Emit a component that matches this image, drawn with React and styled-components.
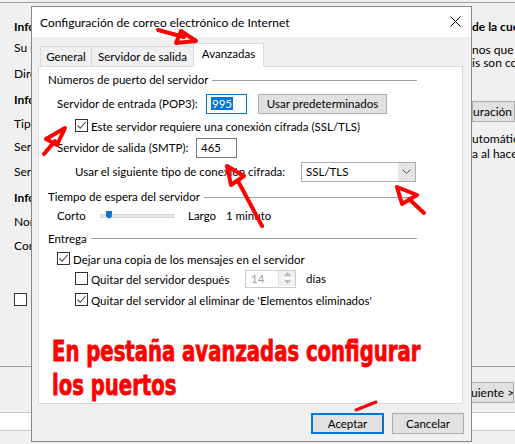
import React from "react";
import styled, { createGlobalStyle } from "styled-components";

const GlobalStyle = createGlobalStyle`
  html, body { margin: 0; padding: 0; }
  body {
    width: 515px;
    height: 444px;
    overflow: hidden;
    background: #f0f0f0;
    font-family: Lato, "Noto Sans", sans-serif;
    font-size: 12px;
    color: #000;
  }
  * { box-sizing: border-box; }
`;

function Check({ checked }) {
    return (
        <CheckBox>
            {checked && (
                <svg width="11" height="11" viewBox="0 0 11 11">
                    <polyline points="1.5,5.5 4.2,8.3 9.5,2" fill="none" stroke="#444" strokeWidth="1.1" />
                </svg>
            )}
        </CheckBox>
    );
}

function Annotations() {
    return (
        <Overlay width="515" height="444" viewBox="0 0 515 444">
            <g fill="none" stroke="#ff0000" strokeWidth="4" strokeLinecap="round" strokeLinejoin="round">
                <path d="M158 30 L184 37" />
                <polygon points="196,41 181,31 176,43" />
                <polygon points="65,128 46,139 57,145" />
                <path d="M55 141 L44 154" />
                <polygon points="227,166 231,185 244,176" />
                <path d="M238 181 L262 226" />
                <polygon points="397,187 402,204 417,195" />
                <path d="M409 199 L424 213" />
                <path d="M356 410 L376 402" strokeWidth="3" />
            </g>
        </Overlay>
    );
}

function App() {
    return (
        <Screen>
            <GlobalStyle />
            <TopRule />
            <Main>
                <LeftColumn>
                    <BgLine $gap={16} $bold>Información del usuario</BgLine>
                    <BgLine $gap={5}>Su nombre:</BgLine>
                    <BgLine $gap={10}>Dirección de correo electrónico:</BgLine>
                    <BgLine $gap={10} $bold>Información del servidor</BgLine>
                    <BgLine $gap={8}>Tipo de cuenta:</BgLine>
                    <BgLine $gap={7}>Servidor de correo entrante:</BgLine>
                    <BgLine $gap={9}>Servidor de correo saliente (SMTP):</BgLine>
                    <BgLine $gap={10} $bold>Información de inicio de sesión</BgLine>
                    <BgLine $gap={8}>Nombre de usuario:</BgLine>
                    <BgLine $gap={8}>Contraseña:</BgLine>
                    <BgCheckRow>
                        <Check />
                    </BgCheckRow>
                </LeftColumn>
                <RightColumn>
                    <BgLine $gap={16} $bold>de la cuenta</BgLine>
                    <BgPara $gap={8} $lh={13}>
                        nos que pruebe su cuenta
                        <br />
                        is son correctos.
                    </BgPara>
                    <BgButton>uración de la cuenta...</BgButton>
                    <BgPara $gap={9} $lh={15}>
                        utomáticamente
                        <br />
                        a al hacer clic
                    </BgPara>
                </RightColumn>
            </Main>
            <Footer>
                <FooterButtons>
                    <BgButton $inline>uiente &gt;</BgButton>
                </FooterButtons>
                <WhiteStrip />
            </Footer>

            <Dialog>
                <TitleBar>
                    <Title>Configuración de correo electrónico de Internet</Title>
                    <Close>
                        <svg width="11" height="11" viewBox="0 0 11 11">
                            <path d="M0.5 0.5 L10.5 10.5 M10.5 0.5 L0.5 10.5" stroke="#000" strokeWidth="1" />
                        </svg>
                    </Close>
                </TitleBar>
                <DialogBody>
                    <TabStrip>
                        <Tab $w={52}>General</Tab>
                        <Tab $w={103}>Servidor de salida</Tab>
                        <Tab $w={71} $active>
                            Avanzadas
                        </Tab>
                    </TabStrip>
                    <Panel>
                        <GroupHeading>
                            <span>Números de puerto del servidor</span>
                            <Rule />
                        </GroupHeading>
                        <Row $gap={7} $h={20} $indent={9}>
                            <Label $w={149}>Servidor de entrada (POP3):</Label>
                            <TextBox $w={41} $focus>
                                <Selected>995</Selected>
                            </TextBox>
                            <PushButton $w={129} $ml={11}>
                                Usar predeterminados
                            </PushButton>
                        </Row>
                        <Row $gap={5} $h={14} $indent={27}>
                            <Check checked />
                            <CheckLabel>Este servidor requiere una conexión cifrada (SSL/TLS)</CheckLabel>
                        </Row>
                        <Row $gap={5} $h={20} $indent={9}>
                            <Label $w={139}>Servidor de salida (SMTP):</Label>
                            <TextBox $w={41}>465</TextBox>
                        </Row>
                        <Row $gap={4} $h={20} $indent={27}>
                            <Label $w={226}>Usar el siguiente tipo de conexión cifrada:</Label>
                            <Select>
                                <span>SSL/TLS</span>
                                <SelectArrow>
                                    <svg width="9" height="5" viewBox="0 0 9 5">
                                        <polyline points="0.5,0.5 4.5,4.5 8.5,0.5" fill="none" stroke="#555" strokeWidth="1" />
                                    </svg>
                                </SelectArrow>
                            </Select>
                        </Row>
                        <GroupHeading $gap={8}>
                            <span>Tiempo de espera del servidor</span>
                            <Rule />
                        </GroupHeading>
                        <Row $gap={5} $h={15} $indent={9}>
                            <Label $w={43}>Corto</Label>
                            <Slider>
                                <Thumb style={{ left: 5 }} />
                            </Slider>
                            <Label $w={38} $ml={14}>
                                Largo
                            </Label>
                            <span>1 minuto</span>
                        </Row>
                        <GroupHeading $gap={8}>
                            <span>Entrega</span>
                            <Rule />
                        </GroupHeading>
                        <Row $gap={7} $h={14} $indent={9}>
                            <Check checked />
                            <CheckLabel>Dejar una copia de los mensajes en el servidor</CheckLabel>
                        </Row>
                        <Row $gap={4} $h={18} $indent={27}>
                            <Check />
                            <CheckLabel $w={154}>Quitar del servidor después</CheckLabel>
                            <Spinner>
                                <span>14</span>
                                <SpinButtons>
                                    <SpinHalf>
                                        <svg width="7" height="4" viewBox="0 0 7 4">
                                            <polygon points="0,4 3.5,0 7,4" fill="#bbb" />
                                        </svg>
                                    </SpinHalf>
                                    <SpinHalf>
                                        <svg width="7" height="4" viewBox="0 0 7 4">
                                            <polygon points="0,0 3.5,4 7,0" fill="#bbb" />
                                        </svg>
                                    </SpinHalf>
                                </SpinButtons>
                            </Spinner>
                            <Label $ml={10}>días</Label>
                        </Row>
                        <Row $gap={5} $h={14} $indent={27}>
                            <Check checked />
                            <CheckLabel>Quitar del servidor al eliminar de 'Elementos eliminados'</CheckLabel>
                        </Row>
                        <Note>
                            En pestaña avanzadas configurar
                            <br />
                            los puertos
                        </Note>
                    </Panel>
                    <ButtonRow>
                        <PushButton $w={73} $h={21} $default>
                            Aceptar
                        </PushButton>
                        <PushButton $w={72} $h={21}>
                            Cancelar
                        </PushButton>
                    </ButtonRow>
                </DialogBody>
            </Dialog>
            <Annotations />
        </Screen>
    );
}

export default App;

const Screen = styled.div`
    position: relative;
    width: 515px;
    height: 444px;
    overflow: hidden;
    background: #f0f0f0;
    padding-top: 2px;
    display: flex;
    flex-direction: column;
`;
const TopRule = styled.div`
    border-top: 1px solid #a0a0a0;
`;
const Main = styled.div`
    height: 363px;
    display: grid;
    grid-template-columns: 472px 1fr;
`;
const LeftColumn = styled.div`
    display: flex;
    flex-direction: column;
    padding-left: 14px;
`;
const RightColumn = styled.div`
    display: flex;
    flex-direction: column;
    white-space: nowrap;
    overflow: hidden;
`;
const BgLine = styled.div`
    height: 16px;
    line-height: 16px;
    margin-top: ${(p) => p.$gap}px;
    font-weight: ${(p) => (p.$bold ? 700 : 400)};
    white-space: nowrap;
`;
const BgPara = styled.div`
    margin-top: ${(p) => p.$gap}px;
    line-height: ${(p) => p.$lh}px;
`;
const BgCheckRow = styled.div`
    margin-top: 39px;
    display: flex;
`;
const BgButton = styled.div`
    margin-top: ${(p) => (p.$inline ? 0 : 32)}px;
    height: 21px;
    background: #e1e1e1;
    border: 1px solid #adadad;
    display: flex;
    align-items: center;
    white-space: nowrap;
    overflow: hidden;
    width: ${(p) => (p.$inline ? "60px" : "auto")};
    padding-left: ${(p) => (p.$inline ? "16px" : "0")};
`;
const Footer = styled.div`
    border-top: 1px solid #a0a0a0;
    padding-top: 15px;
    display: flex;
    flex-direction: column;
`;
const FooterButtons = styled.div`
    display: flex;
    justify-content: flex-end;
    padding-right: 1px;
    height: 20px;
`;
const WhiteStrip = styled.div`
    margin-top: 10px;
    height: 19px;
    background: #fff;
    border-top: 1px solid #c8c8c8;
    border-bottom: 1px solid #c8c8c8;
`;

const Dialog = styled.div`
    position: absolute;
    left: 31px;
    top: 6px;
    width: 441px;
    height: 436px;
    border: 1px solid #888;
    background: #f0f0f0;
    display: flex;
    flex-direction: column;
    z-index: 1;
`;
const TitleBar = styled.div`
    height: 30px;
    background: #fff;
    display: flex;
    align-items: center;
    justify-content: space-between;
    padding: 0 10px 0 8px;
`;
const Title = styled.span`
    font-size: 12px;
`;
const Close = styled.span`
    display: flex;
    margin-top: -1px;
`;
const DialogBody = styled.div`
    padding: 6px 8px 0 6px;
    display: flex;
    flex-direction: column;
    font-size: 11.5px;
`;
const TabStrip = styled.div`
    display: flex;
    align-items: flex-end;
    height: 23px;
    padding-left: 2px;
    position: relative;
    z-index: 2;
`;
const Tab = styled.div`
    width: ${(p) => p.$w}px;
    height: ${(p) => (p.$active ? 24 : 20)}px;
    margin-left: -1px;
    margin-bottom: ${(p) => (p.$active ? -1 : 0)}px;
    border: 1px solid #d9d9d9;
    border-bottom: ${(p) => (p.$active ? "1px solid #fff" : "none")};
    background: ${(p) => (p.$active ? "#fff" : "#f0f0f0")};
    display: flex;
    align-items: center;
    justify-content: center;
    padding-bottom: ${(p) => (p.$active ? 3 : 0)}px;
    white-space: nowrap;
    &:first-child {
        margin-left: 0;
    }
`;
const Panel = styled.div`
    height: 338px;
    background: #fff;
    border: 1px solid #d9d9d9;
    padding: 6px 45px 0 9px;
    display: flex;
    flex-direction: column;
`;
const GroupHeading = styled.div`
    height: 14px;
    margin-top: ${(p) => p.$gap || 0}px;
    display: flex;
    align-items: center;
    gap: 4px;
    white-space: nowrap;
`;
const Rule = styled.div`
    flex: 1;
    border-top: 1px solid #a0a0a0;
    margin-top: 1px;
`;
const Row = styled.div`
    height: ${(p) => p.$h}px;
    margin-top: ${(p) => p.$gap}px;
    padding-left: ${(p) => p.$indent}px;
    display: flex;
    align-items: center;
    white-space: nowrap;
`;
const Label = styled.span`
    flex: none;
    width: ${(p) => (p.$w ? `${p.$w}px` : "auto")};
    margin-left: ${(p) => p.$ml || 0}px;
`;
const CheckBox = styled.span`
    width: 13px;
    height: 13px;
    flex: none;
    border: 1px solid #333;
    background: #fff;
    display: flex;
    align-items: center;
    justify-content: center;
`;
const CheckLabel = styled.span`
    flex: none;
    width: ${(p) => (p.$w ? `${p.$w}px` : "auto")};
    margin-left: 3px;
    padding-top: 1px;
`;
const TextBox = styled.div`
    width: ${(p) => p.$w}px;
    height: 20px;
    flex: none;
    border: 1px solid ${(p) => (p.$focus ? "#0078d7" : "#7a7a7a")};
    background: #fff;
    display: flex;
    align-items: center;
    padding-left: 4px;
`;
const Selected = styled.span`
    background: #0078d7;
    color: #fff;
    padding: 0 1px;
    line-height: 13px;
`;
const PushButton = styled.div`
    width: ${(p) => p.$w}px;
    height: ${(p) => p.$h || 20}px;
    margin-left: ${(p) => p.$ml || 0}px;
    background: #e1e1e1;
    border: ${(p) => (p.$default ? "2px solid #0078d7" : "1px solid #adadad")};
    display: flex;
    align-items: center;
    justify-content: center;
    flex: none;
`;
const Select = styled.div`
    width: 115px;
    height: 20px;
    flex: none;
    border: 1px solid #adadad;
    background: #fff;
    display: flex;
    align-items: center;
    justify-content: space-between;
    padding-left: 4px;
`;
const SelectArrow = styled.div`
    width: 17px;
    height: 18px;
    background: #e5e5e5;
    display: flex;
    align-items: center;
    justify-content: center;
`;
const Slider = styled.div`
    position: relative;
    flex: none;
    width: 74px;
    height: 4px;
    background: #e7e7e7;
    border: 1px solid #d6d6d6;
`;
const Thumb = styled.div`
    position: absolute;
    top: -4px;
    width: 6px;
    height: 8px;
    background: #0078d7;
    clip-path: polygon(0 0, 100% 0, 100% 70%, 50% 100%, 0 70%);
`;
const Spinner = styled.div`
    width: 51px;
    height: 18px;
    flex: none;
    border: 1px solid #cccccc;
    background: #fff;
    color: #a0a0a0;
    display: flex;
    align-items: center;
    justify-content: space-between;
    padding-left: 5px;
`;
const SpinButtons = styled.div`
    width: 17px;
    height: 16px;
    display: flex;
    flex-direction: column;
    border-left: 1px solid #e3e3e3;
`;
const SpinHalf = styled.div`
    flex: 1;
    background: #f0f0f0;
    border-bottom: 1px solid #fff;
    display: flex;
    align-items: center;
    justify-content: center;
`;
const Note = styled.div`
    margin-top: 28px;
    margin-left: 4px;
    font-family: "Liberation Sans Narrow", "DejaVu Sans Condensed", sans-serif;
    font-weight: 700;
    font-size: 28px;
    line-height: 34px;
    color: #ff0000;
    -webkit-text-stroke: 0.8px #ff0000;
    white-space: nowrap;
    transform: scaleX(0.78);
    transform-origin: left top;
`;
const ButtonRow = styled.div`
    margin-top: 9px;
    margin-right: -1px;
    display: flex;
    justify-content: flex-end;
    gap: 8px;
`;
const Overlay = styled.svg`
    position: absolute;
    left: 0;
    top: 0;
    z-index: 3;
    pointer-events: none;
`;
